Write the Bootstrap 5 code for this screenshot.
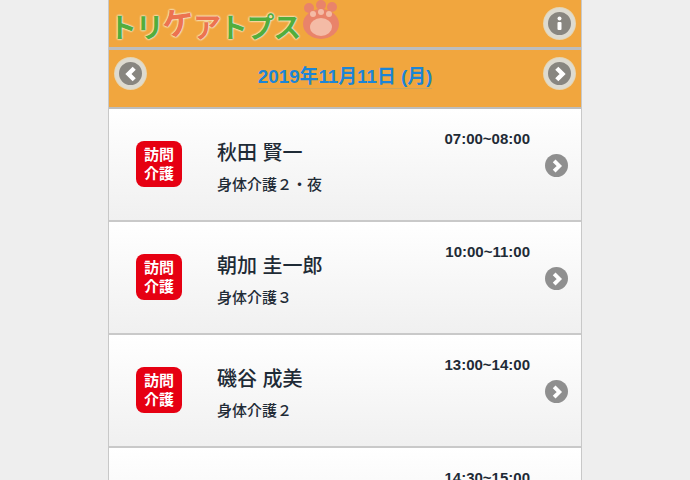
<!DOCTYPE html>
<html lang="ja">
<head>
  <meta charset="UTF-8" />
  <meta name="viewport" content="width=device-width, initial-scale=1" />
  <title>トリケアトプス</title>
  <link href="https://cdn.jsdelivr.net/npm/bootstrap@5.3.0/dist/css/bootstrap.min.css" rel="stylesheet" />
  <style>
    html, body { height: 100%; }
    body {
      background: #eeeeee;
      overflow: hidden;
      font-family: "Liberation Sans", "Noto Sans CJK JP", sans-serif;
      color: #1f2b36;
    }
    #phone {
      width: 474px;
      height: 480px;
      margin-left: 108px;
      overflow: hidden;
      background: #fff;
      border-left: 1px solid #c8c8c8;
      border-right: 1px solid #c8c8c8;
    }
    .bar-top {
      height: 50px;
      background: #f1a63e;
      border-bottom: 3px solid #bdbdbd;
      padding: 0 6px 0 0;
    }
    .bar-date {
      height: 59px;
      background: #f1a63e;
      border-bottom: 2px solid #bdbdbd;
      padding: 0 6px 0 6px;
    }
    .logo-text {
      font-family: "Noto Sans CJK JP", sans-serif;
      font-weight: 700;
      font-size: 28px;
      line-height: 1;
      letter-spacing: -1.300px;
      color: #52ad3c;
      text-shadow: 0 0 2px #f6f3dc, 0 0 2px #f6f3dc, 0 0 2px #f6f3dc;
    }
    .logo-text .ke { color: #ec7350; }
    .logo-text .ke-1 { display: inline-block; transform: rotate(-8deg) translateY(-3px); font-size: 32px; }
    .logo-paw { filter: blur(0.6px); margin-top: -8px; margin-left: 1px; }
    .round-btn {
      width: 31px;
      height: 31px;
      flex: none;
      border-radius: 50%;
      background: #888680;
      border: 4px solid #dedbd0;
      box-shadow: 0 0 0 1px #e6d5b0;
      display: flex;
      align-items: center;
      justify-content: center;
    }
    .bar-date .round-btn { margin-bottom: 10px; }
    .date-text {
      color: #1c85d6;
      font-size: 18.800px;
      font-weight: 700;
      line-height: 1;
      border-bottom: 1px solid #c9a45f;
      padding-bottom: 1px;
    }
    .visit-row {
      height: 113px;
      padding: 0 13px 0 27px;
      background: linear-gradient(#ffffff, #f0f0f0);
      border-bottom: 2px solid #c9c9c9;
    }
    .visit-tag {
      width: 46px;
      height: 46px;
      flex: none;
      margin-top: -2px;
      border-radius: 8px;
      background: #e60012;
      color: #fff;
      font-size: 15px;
      font-weight: 700;
      line-height: 19px;
      text-align: center;
    }
    .visit-name {
      font-size: 20px;
      font-weight: 500;
      line-height: 1;
      margin-bottom: 14px;
    }
    .visit-kind {
      font-size: 15px;
      font-weight: 500;
      line-height: 1;
    }
    .visit-body { margin-left: 35px; margin-top: 5px; }
    .visit-time {
      position: absolute;
      top: 22px;
      right: 51px;
      font-size: 15px;
      font-weight: 700;
      line-height: 1;
    }
    .go-btn {
      width: 23px;
      height: 23px;
      flex: none;
      margin-top: 2px;
      border-radius: 50%;
      background: #8f8f8f;
      display: flex;
      align-items: center;
      justify-content: center;
    }
  </style>
</head>
<body>
  <div id="phone">
    <!-- logo bar -->
    <div class="bar-top d-flex align-items-center justify-content-between">
      <div class="d-flex align-items-center">
        <span class="logo-text"><span>トリ</span><span class="ke ke-1">ケ</span><span class="ke">ア</span><span>トプス</span></span>
        <svg class="logo-paw" width="40" height="40" viewBox="0 0 40 40">
          <g fill="#e9836a">
            <circle cx="8" cy="8" r="5" /><circle cx="20" cy="5" r="5" /><circle cx="31" cy="7" r="5" />
            <ellipse cx="20" cy="24" rx="18" ry="15" />
          </g>
          <g fill="#f4bba6">
            <circle cx="12" cy="14" r="3" /><circle cx="20" cy="12" r="3" /><circle cx="28" cy="14" r="3" />
            <ellipse cx="20" cy="27" rx="11" ry="9" />
          </g>
        </svg>
      </div>
      <div class="round-btn">
        <svg width="23" height="23" viewBox="0 0 23 23"><circle cx="11.500" cy="6.500" r="2" fill="#fff" /><rect x="9.500" y="10" width="4" height="8" rx="1" fill="#fff" /></svg>
      </div>
    </div>
    <!-- date bar -->
    <div class="bar-date d-flex align-items-center justify-content-between">
      <div class="round-btn">
        <svg width="18" height="18" viewBox="0 0 14 14"><path d="M9.500 2.500 5 7l4.500 4.500" fill="none" stroke="#fff" stroke-width="3.400" /></svg>
      </div>
      <span class="date-text">2019年11月11日 (月)</span>
      <div class="round-btn">
        <svg width="18" height="18" viewBox="0 0 14 14"><path d="M4.500 2.500 9 7l-4.500 4.500" fill="none" stroke="#fff" stroke-width="3.400" /></svg>
      </div>
    </div>
    <!-- visits -->
    <div class="visit-row d-flex align-items-center position-relative">
      <div class="visit-tag d-flex align-items-center justify-content-center">訪問<br>介護</div>
      <div class="visit-body flex-grow-1">
        <div class="visit-name">秋田 賢一</div>
        <div class="visit-kind">身体介護２・夜</div>
      </div>
      <div class="visit-time">07:00~08:00</div>
      <div class="go-btn"><svg width="16" height="16" viewBox="0 0 14 14"><path d="M4.500 2.500 9 7l-4.500 4.500" fill="none" stroke="#fff" stroke-width="3.400" /></svg></div>
    </div>
    <div class="visit-row d-flex align-items-center position-relative">
      <div class="visit-tag d-flex align-items-center justify-content-center">訪問<br>介護</div>
      <div class="visit-body flex-grow-1">
        <div class="visit-name">朝加 圭一郎</div>
        <div class="visit-kind">身体介護３</div>
      </div>
      <div class="visit-time">10:00~11:00</div>
      <div class="go-btn"><svg width="16" height="16" viewBox="0 0 14 14"><path d="M4.500 2.500 9 7l-4.500 4.500" fill="none" stroke="#fff" stroke-width="3.400" /></svg></div>
    </div>
    <div class="visit-row d-flex align-items-center position-relative">
      <div class="visit-tag d-flex align-items-center justify-content-center">訪問<br>介護</div>
      <div class="visit-body flex-grow-1">
        <div class="visit-name">磯谷 成美</div>
        <div class="visit-kind">身体介護２</div>
      </div>
      <div class="visit-time">13:00~14:00</div>
      <div class="go-btn"><svg width="16" height="16" viewBox="0 0 14 14"><path d="M4.500 2.500 9 7l-4.500 4.500" fill="none" stroke="#fff" stroke-width="3.400" /></svg></div>
    </div>
    <div class="visit-row d-flex align-items-center position-relative">
      <div class="visit-time">14:30~15:00</div>
    </div>
  </div>
  <script src="https://cdn.jsdelivr.net/npm/bootstrap@5.3.0/dist/js/bootstrap.bundle.min.js"></script>
</body>
</html>
